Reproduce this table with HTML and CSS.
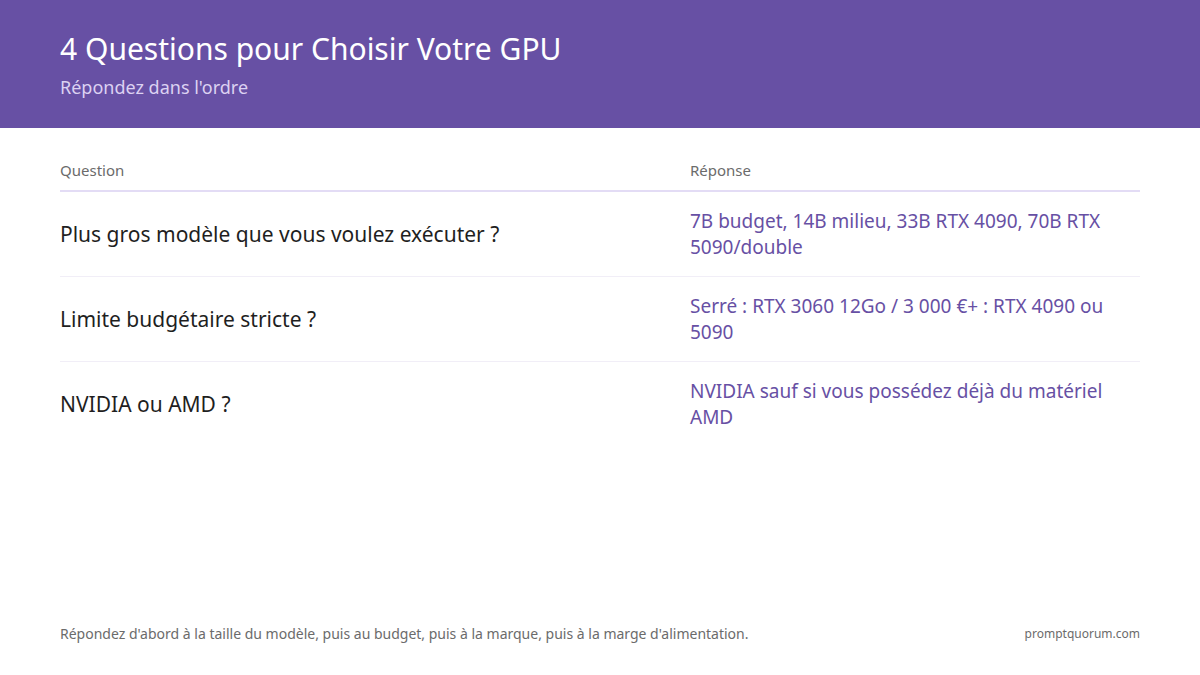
FILE: index.html
```html
<!DOCTYPE html>
<html lang="fr">
<head>
<meta charset="utf-8">
<link rel="stylesheet" href="styles.css">
</head>
<body>
<div class="page">
  <header class="hero">
    <h1 class="title">4 Questions pour Choisir Votre GPU</h1>
    <p class="subtitle">Répondez dans l'ordre</p>
  </header>
  <main class="content">
    <table class="qtable">
      <thead>
        <tr><th class="col-q">Question</th><th class="col-a">Réponse</th></tr>
      </thead>
      <tbody>
        <tr><td class="q">Plus gros modèle que vous voulez exécuter ?</td><td class="a">7B budget, 14B milieu, 33B RTX 4090, 70B RTX 5090/double</td></tr>
        <tr><td class="q">Limite budgétaire stricte ?</td><td class="a">Serré : RTX 3060 12Go / 3 000 €+ : RTX 4090 ou 5090</td></tr>
        <tr><td class="q">NVIDIA ou AMD ?</td><td class="a">NVIDIA sauf si vous possédez déjà du matériel AMD</td></tr>
      </tbody>
    </table>
  </main>
  <footer class="foot">
    <span class="note">Répondez d'abord à la taille du modèle, puis au budget, puis à la marque, puis à la marge d'alimentation.</span>
    <span class="brand">promptquorum.com</span>
  </footer>
</div>
</body>
</html>
```
FILE: styles.css
```css
* { box-sizing: border-box; }
html, body { margin: 0; padding: 0; }
body {
  font-family: "Noto Sans", "Open Sans", sans-serif;
  background: #ffffff;
  color: #1f1f1f;
}
.page {
  width: 1200px;
  height: 675px;
  display: flex;
  flex-direction: column;
}
.hero {
  background: #6750a4;
  height: 128px;
  padding: 29px 60px 0;
}
.title {
  margin: 0;
  font-size: 30px;
  font-weight: 400;
  line-height: 40px;
  color: #ffffff;
}
.subtitle {
  margin: 6px 0 0;
  font-size: 18px;
  line-height: 24px;
  color: #dcd2f2;
}
.content {
  flex: 1;
  padding: 20px 60px 0;
}
.qtable {
  width: 100%;
  border-collapse: collapse;
}
.qtable th {
  text-align: left;
  font-weight: 400;
  font-size: 15px;
  line-height: 20px;
  color: #6b6b6b;
  padding: 12px 0 10px;
  border-bottom: 2px solid #e3dcf5;
}
.col-q { width: 630px; }
.qtable td {
  padding: 16px 0 16px;
  border-bottom: 1px solid #f1eef7;
  vertical-align: middle;
}
.qtable tbody tr:last-child td { border-bottom: none; }
.q {
  font-size: 21px;
  line-height: 28px;
  color: #1f1f1f;
  padding-right: 20px;
}
.a {
  font-size: 19px;
  line-height: 26px;
  color: #6750a4;
  padding-right: 20px !important;
}
.foot {
  display: flex;
  justify-content: space-between;
  align-items: center;
  padding: 0 60px 32px;
  font-size: 14px;
  line-height: 18px;
  color: #6b6b6b;
}
.brand { font-size: 12px; }
```
